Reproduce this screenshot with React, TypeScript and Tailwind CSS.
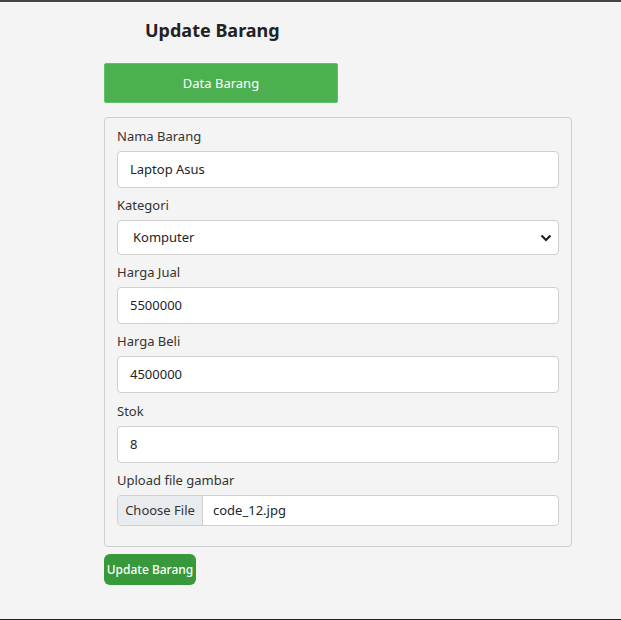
import React from "react";

const font = { fontFamily: '"Noto Sans", "Open Sans", "Liberation Sans", sans-serif' };

function Field({ label, value, gap = 7 }: { label: string; value: string; gap?: number }) {
  return (
    <div className={gap === 8 ? "mb-[8px]" : "mb-[7px]"}>
      <div className="text-[13px] leading-[20px] text-[#333] mb-[5px]">{label}</div>
      <div className="h-[37px] bg-white border border-[#cfcfcf] rounded-[4px] flex items-center pl-[12px] pt-[1px] text-[13px] text-[#212529]">
        {value}
      </div>
    </div>
  );
}

export default function App() {
  return (
    <div className="w-[621px] h-[620px] bg-[#f4f4f4] border-t-2 border-t-[#444] border-b border-b-[#222] overflow-hidden" style={font}>
      <div className="pl-[104px] pr-[49px]">
        <div className="w-[234px] pt-[16px] pl-[41px] text-[18px] leading-[25px] font-bold text-[#222]">Update Barang</div>
        <div className="mt-[20px] w-[234px] h-[40px] bg-[#4caf50] border border-[#62c266] rounded-[2px] flex items-center justify-center pt-[2px] text-white text-[13px]">
          Data Barang
        </div>
        <div className="mt-[14px] border border-[#cfcfcf] rounded-[4px] bg-[#f4f4f4] px-[12px] pt-[8px] pb-[13px]">
          <Field label="Nama Barang" value="Laptop Asus" />
          <div className="mb-[7px]">
            <div className="text-[13px] leading-[20px] text-[#333] mb-[5px]">Kategori</div>
            <div className="h-[35px] bg-white border border-[#cfcfcf] rounded-[4px] flex items-center justify-between pl-[15px] pr-[5px] pt-[1px] text-[13px] text-[#212529]">
              <span>Komputer</span>
              <svg width="12" height="8" viewBox="0 0 12 8" className="mr-[1px]">
                <path d="M1.5 1.5 L6 6 L10.5 1.5" fill="none" stroke="#222" strokeWidth="2.2" />
              </svg>
            </div>
          </div>
          <Field label="Harga Jual" value="5500000" />
          <Field label="Harga Beli" value="4500000" gap={8} />
          <Field label="Stok" value="8" />
          <div className="mb-[7px]">
            <div className="text-[13px] leading-[20px] text-[#333] mb-[5px]">Upload file gambar</div>
            <div className="h-[31px] bg-white border border-[#cfcfcf] rounded-[4px] flex items-stretch text-[13px] text-[#212529] overflow-hidden">
              <div className="w-[85px] bg-[#e9ecef] border-r border-r-[#cfcfcf] flex items-center justify-center text-[#333]">Choose File</div>
              <div className="flex items-center pl-[10px]">code_12.jpg</div>
            </div>
          </div>
        </div>
        <div className="mt-[7px] w-[92px] h-[31px] bg-[#37993a] rounded-[6px] flex items-center justify-center text-white text-[12px] font-medium">
          Update Barang
        </div>
      </div>
    </div>
  );
}
